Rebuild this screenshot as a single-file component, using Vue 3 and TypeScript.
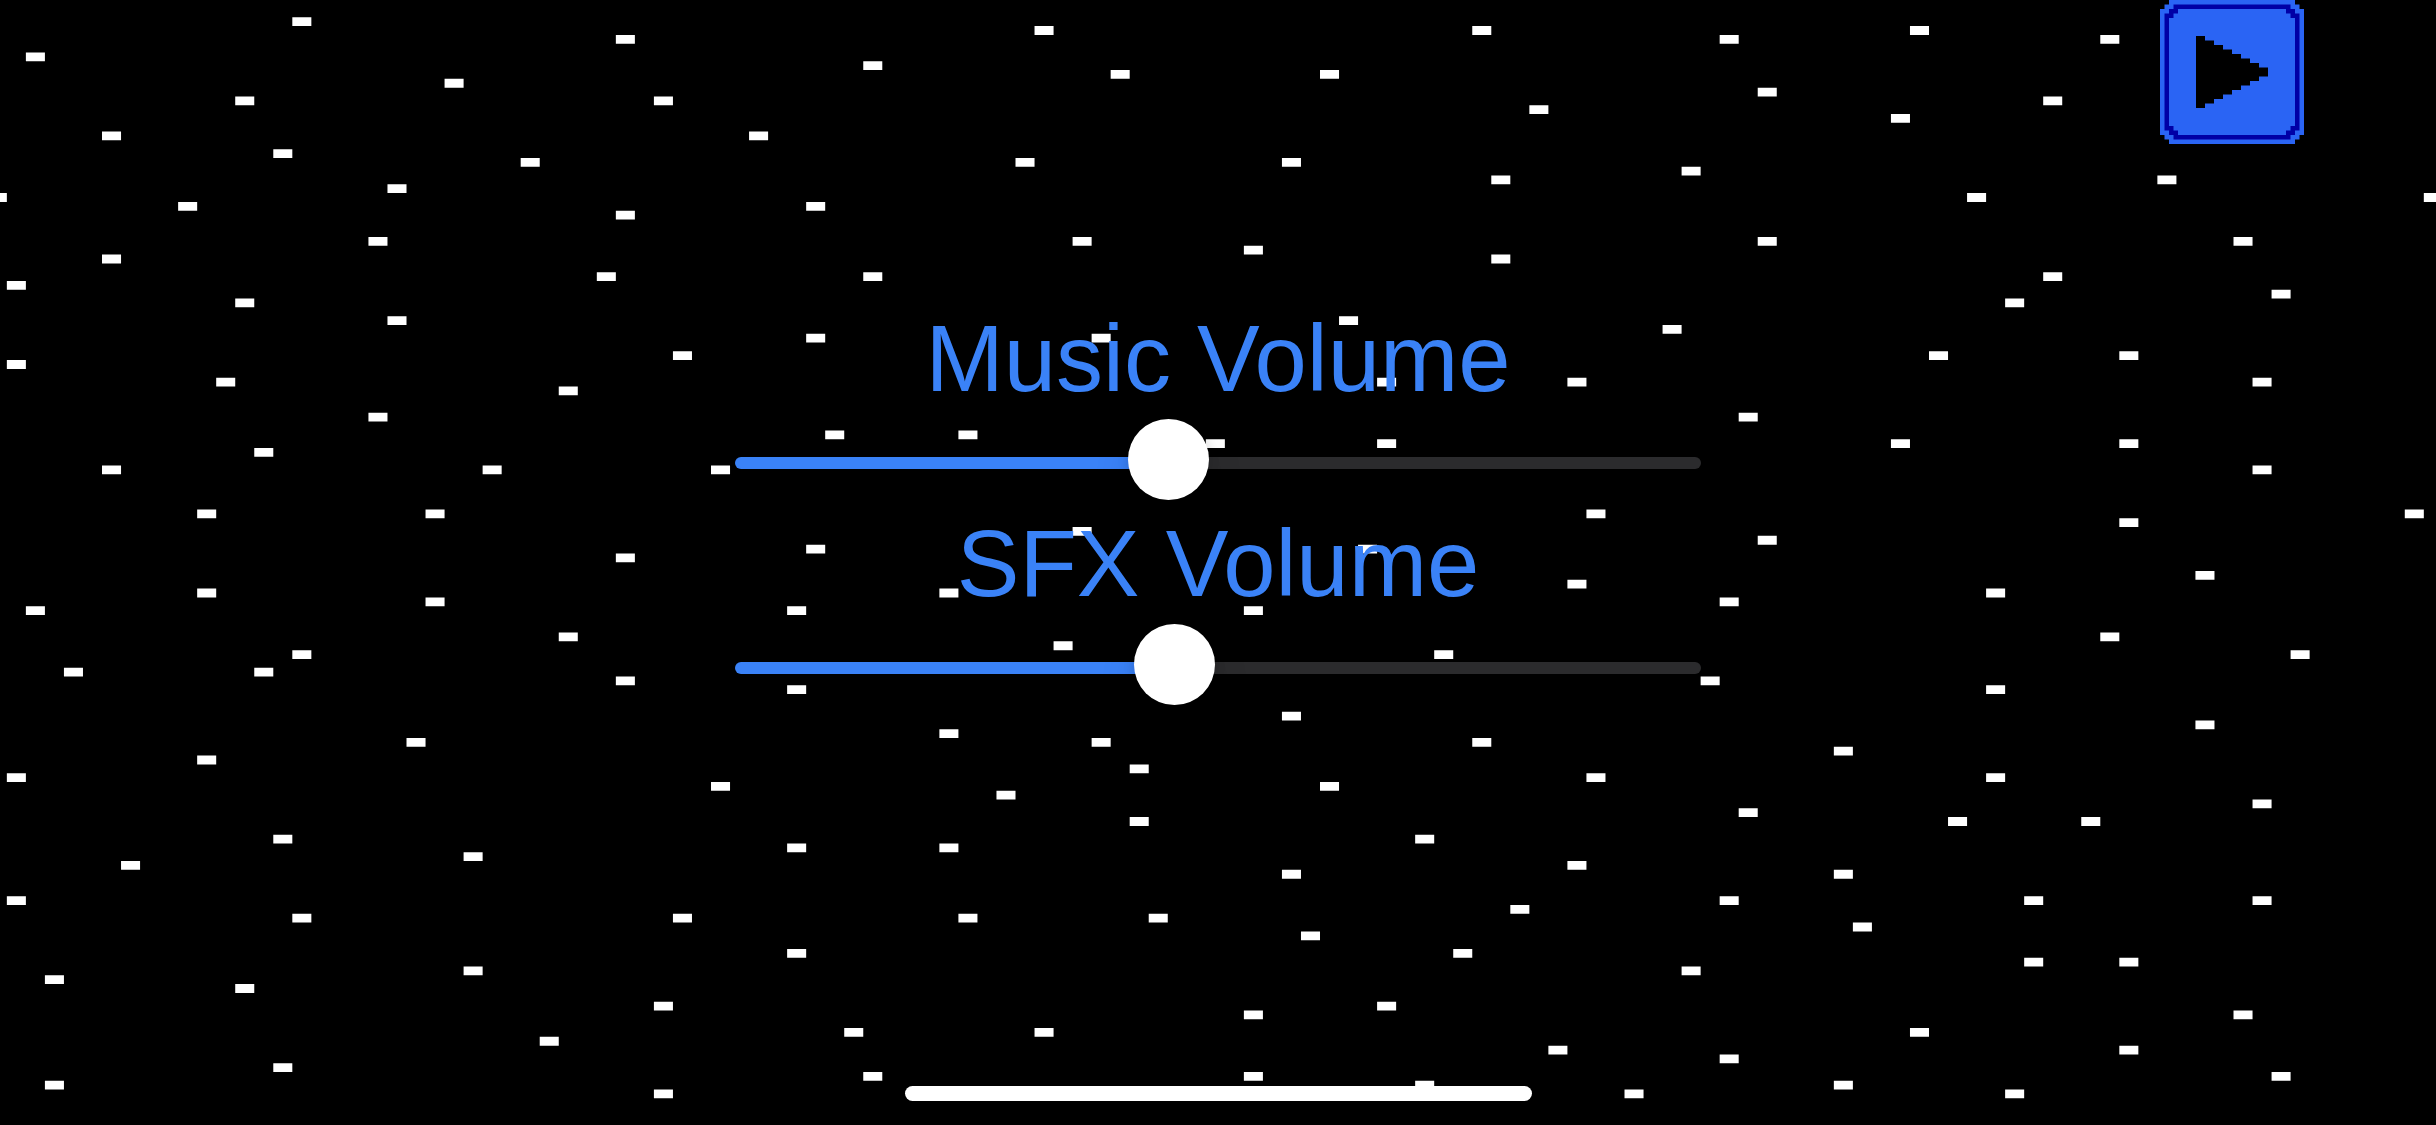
<script setup lang="ts">
import { reactive } from 'vue'

interface VolumeSetting {
  id: string
  label: string
  value: number
}

const settings = reactive<VolumeSetting[]>([
  { id: 'music-volume', label: 'Music Volume', value: 444 },
  { id: 'sfx-volume', label: 'SFX Volume', value: 451 },
])

// Star cells as [column, row] on a 128 x 128 sky grid.
const stars: [number, number][] = [
  [15, 2], [1, 6], [32, 4], [54, 3], [45, 7], [58, 8], [23, 9], [34, 11], [12, 11], [5, 15],
  [14, 17], [39, 15], [27, 18], [20, 21], [-1, 22], [9, 23], [32, 24], [19, 27], [5, 29], [0, 32],
  [12, 34], [20, 36], [31, 31], [0, 41], [11, 43], [29, 44], [35, 40], [19, 47], [13, 51], [5, 53],
  [25, 53], [37, 53], [10, 58], [22, 58], [32, 63], [10, 67], [22, 68], [1, 69], [29, 72], [15, 74],
  [3, 76], [13, 76], [32, 77], [21, 84], [10, 86], [0, 88], [37, 89], [14, 95], [24, 97], [6, 98],
  [0, 102], [15, 104], [35, 104], [24, 110], [2, 111], [12, 112], [34, 114], [28, 118], [14, 121],
  [2, 123], [34, 124], [53, 18], [42, 23], [56, 27], [45, 31], [42, 38], [57, 38], [43, 49],
  [50, 49], [63, 50], [42, 62], [56, 60], [41, 69], [49, 67], [55, 73], [41, 78], [49, 83],
  [57, 84], [59, 87], [52, 90], [59, 93], [41, 96], [49, 96], [50, 104], [60, 104], [41, 108],
  [44, 117], [54, 117], [45, 122], [77, 3], [69, 8], [80, 12], [67, 18], [78, 20], [65, 28],
  [78, 29], [70, 36], [72, 43], [72, 50], [82, 43], [87, 37], [83, 58], [71, 62], [82, 66],
  [65, 69], [75, 74], [67, 81], [77, 84], [83, 88], [69, 89], [74, 95], [82, 98], [67, 99],
  [79, 103], [68, 106], [76, 108], [72, 114], [65, 115], [81, 119], [65, 122], [74, 123],
  [85, 124], [90, 4], [92, 10], [88, 19], [92, 27], [91, 47], [92, 61], [90, 68], [89, 77],
  [91, 92], [90, 102], [88, 110], [90, 120], [100, 3], [99, 13], [110, 4], [107, 11], [113, 20],
  [103, 22], [127, 22], [117, 27], [107, 31], [105, 34], [119, 33], [101, 40], [111, 40],
  [118, 43], [99, 50], [111, 50], [118, 53], [126, 58], [111, 59], [115, 65], [104, 67],
  [110, 72], [120, 74], [104, 78], [115, 82], [96, 85], [104, 88], [118, 91], [102, 93],
  [109, 93], [96, 99], [106, 102], [118, 102], [97, 105], [106, 109], [111, 109], [117, 115],
  [100, 117], [111, 119], [96, 123], [105, 124], [119, 122],
]

const starPath = stars.map(([col, row]) => `M${col} ${row}h1v1h-1z`).join('')
</script>

<template>
  <div class="screen">
    <svg class="sky" viewBox="-0.36 0.03 128 128" preserveAspectRatio="none" aria-hidden="true">
      <path :d="starPath" fill="#fff" />
    </svg>

    <header class="top-bar">
      <button class="play" type="button" aria-label="Play">
        <svg viewBox="0 0 32 32" aria-hidden="true">
          <path fill="#2a64f4" d="M2 0H30V1H31V2H32V30H31V31H30V32H2V31H1V30H0V2H1V1H2Z" />
          <path
            fill="#0000a6"
            fill-rule="evenodd"
            d="M3 1H29V2H30V3H31V29H30V30H29V31H3V30H2V29H1V3H2V2H3ZM4 2V3H3V4H2V28H3V29H4V30H28V29H29V28H30V4H29V3H28V2Z"
          />
          <path
            fill="#000"
            d="M8 8H10V9H12V10H14V11H16V12H18V13H20V14H22V15H24V17H22V18H20V19H18V20H16V21H14V22H12V23H10V24H8Z"
          />
        </svg>
      </button>
    </header>

    <main class="settings">
      <div v-for="setting in settings" :key="setting.id" class="setting">
        <label :for="setting.id">{{ setting.label }}</label>
        <input
          :id="setting.id"
          v-model.number="setting.value"
          type="range"
          min="0"
          max="1000"
          :style="{ '--level': setting.value / 1000 }"
        />
      </div>
    </main>

    <div class="home-indicator"></div>
  </div>
</template>

<style>
body {
  margin: 0;
  background: #000;
}
</style>

<style scoped>
.screen {
  position: relative;
  display: flex;
  flex-direction: column;
  min-height: 100vh;
  overflow: hidden;
  background: #000;
  font-family: "Liberation Sans", Arial, sans-serif;
}

.sky {
  position: absolute;
  inset: 0;
  width: 100%;
  height: 100%;
}

.top-bar {
  position: relative;
  display: flex;
  justify-content: flex-end;
  padding-right: 132px;
}

.play {
  width: 144px;
  height: 144px;
  padding: 0;
  border: 0;
  background: none;
  cursor: pointer;
}

.play svg {
  display: block;
  width: 100%;
  height: 100%;
}

.settings {
  position: relative;
  width: 39.65%;
  margin: 154px auto 48px;
}

.setting {
  display: flex;
  flex-direction: column;
}

label {
  color: #3a82f7;
  font-size: 94px;
  line-height: 121px;
  text-align: center;
  white-space: nowrap;
}

input {
  --fill: calc(40px + (100% - 80px) * var(--level));
  appearance: none;
  width: 100%;
  height: 12px;
  margin: 38px 0 34px;
  border-radius: 6px;
  background: linear-gradient(to right, #3a82f7 var(--fill), #2b2b2d var(--fill));
  cursor: pointer;
}

input::-webkit-slider-runnable-track {
  height: 12px;
}

input::-webkit-slider-thumb {
  appearance: none;
  width: 81px;
  height: 81px;
  margin-top: -38px;
  border-radius: 50%;
  background: #fff;
  box-shadow: 0 1px 12px rgba(0, 0, 0, 0.12), 0 18px 39px rgba(0, 0, 0, 0.12);
}

.home-indicator {
  position: relative;
  width: 627px;
  max-width: 60%;
  height: 15px;
  margin: auto auto 24px;
  border-radius: 8px;
  background: #fff;
}
</style>
